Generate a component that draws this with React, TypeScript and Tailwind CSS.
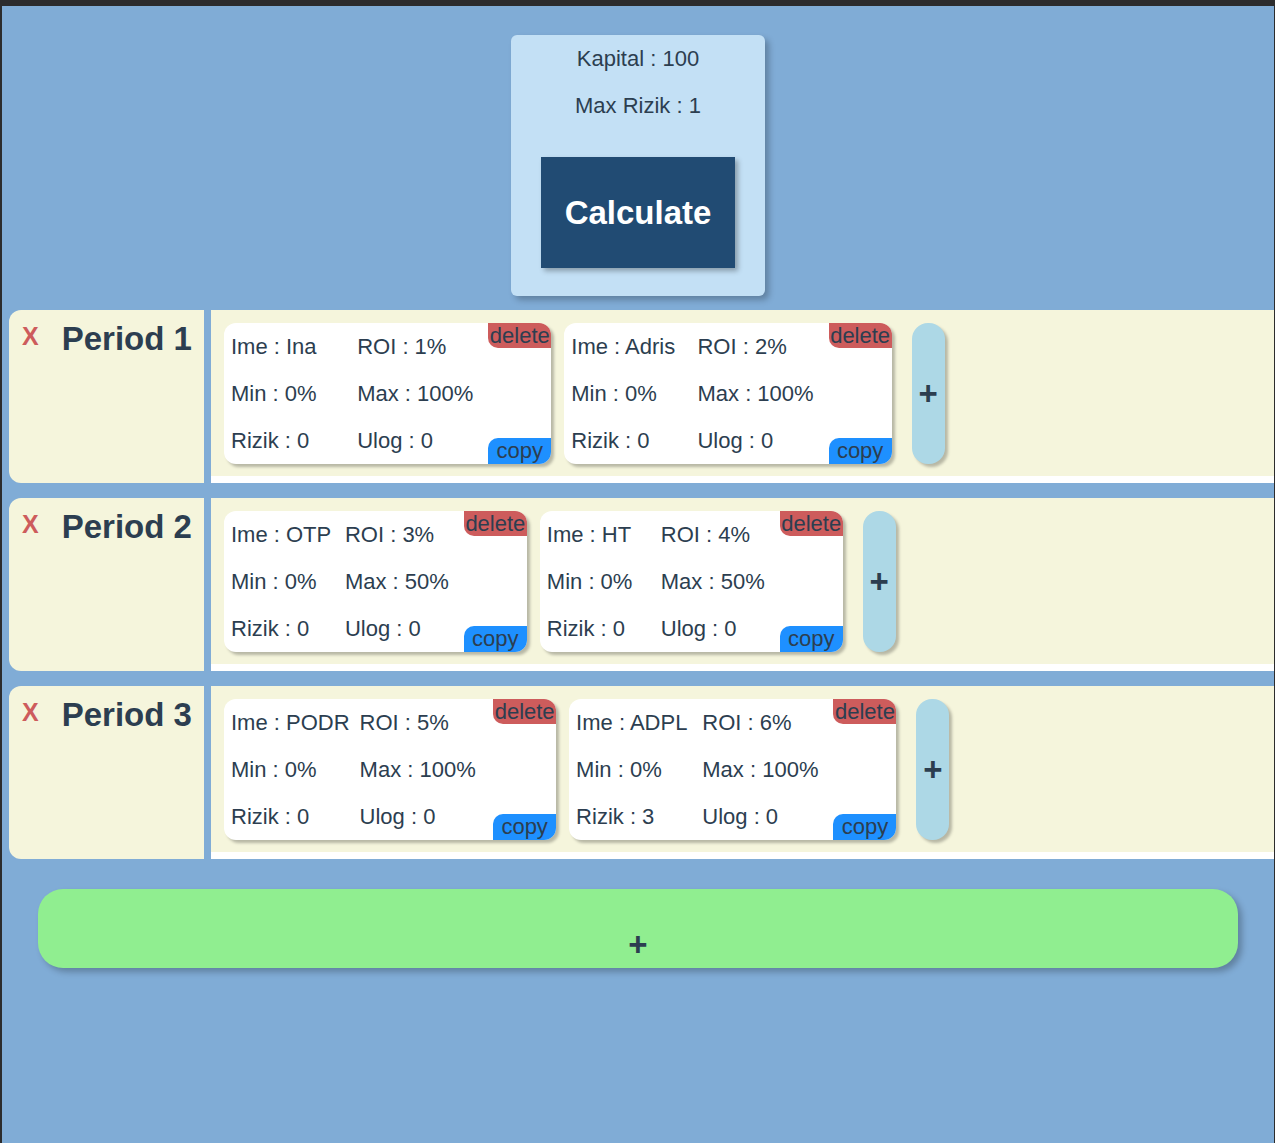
import { useState } from 'react';

type Item = { ime: string; roi: number; min: number; max: number; rizik: number; ulog: number };
type Period = { name: string; items: Item[] };

const initialPeriods: Period[] = [
  {
    name: 'Period 1',
    items: [
      { ime: 'Ina', roi: 1, min: 0, max: 100, rizik: 0, ulog: 0 },
      { ime: 'Adris', roi: 2, min: 0, max: 100, rizik: 0, ulog: 0 },
    ],
  },
  {
    name: 'Period 2',
    items: [
      { ime: 'OTP', roi: 3, min: 0, max: 50, rizik: 0, ulog: 0 },
      { ime: 'HT', roi: 4, min: 0, max: 50, rizik: 0, ulog: 0 },
    ],
  },
  {
    name: 'Period 3',
    items: [
      { ime: 'PODR', roi: 5, min: 0, max: 100, rizik: 0, ulog: 0 },
      { ime: 'ADPL', roi: 6, min: 0, max: 100, rizik: 3, ulog: 0 },
    ],
  },
];

function ItemCard({ item, onDelete, onCopy }: { item: Item; onDelete: () => void; onCopy: () => void }) {
  const cells = [
    `Ime : ${item.ime}`,
    `ROI : ${item.roi}%`,
    `Min : ${item.min}%`,
    `Max : ${item.max}%`,
    `Rizik : ${item.rizik}`,
    `Ulog : ${item.ulog}`,
  ];
  return (
    <div className="flex overflow-hidden rounded-[12px] bg-white pl-[7px] shadow-[3px_3px_3px_rgba(0,0,0,0.25)]">
      <div className="grid grid-cols-[1fr_1fr]">
        {cells.map((c) => (
          <div key={c} className="flex h-[47px] items-center whitespace-nowrap pr-[10px]">
            {c}
          </div>
        ))}
      </div>
      <div className="ml-[5px] flex flex-col justify-between">
        <button
          onClick={onDelete}
          className="rounded-bl-[10px] bg-[#cd5c5c] px-[1.5px] leading-[25px] text-[#2c3e50]"
        >
          delete
        </button>
        <button
          onClick={onCopy}
          className="rounded-tl-[10px] bg-[#1e90ff] px-[1.5px] leading-[26px] text-[#2c3e50]"
        >
          copy
        </button>
      </div>
    </div>
  );
}

export default function App() {
  const [periods, setPeriods] = useState<Period[]>(initialPeriods);
  const kapital = 100;
  const maxRizik = 1;

  function removePeriod(pi: number) {
    setPeriods(periods.filter((_, i) => i !== pi));
  }

  function updateItems(pi: number, fn: (items: Item[]) => Item[]) {
    setPeriods(periods.map((p, i) => (i === pi ? { ...p, items: fn(p.items) } : p)));
  }

  function addPeriod() {
    setPeriods([...periods, { name: `Period ${periods.length + 1}`, items: [] }]);
  }

  return (
    <div className="min-h-screen border-l-2 border-r border-t-[6px] border-[#2c2c2d] bg-[#80acd6] font-['Liberation_Sans',Arial,sans-serif] text-[22px] text-[#2c3e50]">
      {/* Settings card */}
      <div className="flex justify-center pt-[29px]">
        <div className="flex w-[254px] flex-col items-center rounded-md bg-[#c3e0f5] pb-[28px] pt-[11px] shadow-[4px_4px_6px_rgba(0,0,0,0.25)]">
          <p className="leading-[25px]">Kapital : {kapital}</p>
          <p className="mt-[22px] leading-[25px]">Max Rizik : {maxRizik}</p>
          <button className="mt-[39px] h-[111px] w-[194px] bg-[#214b73] text-[33px] font-bold text-white shadow-[3px_3px_5px_rgba(0,0,0,0.3)]">
            Calculate
          </button>
        </div>
      </div>

      {/* Periods */}
      <div className="mt-[14px] flex flex-col gap-[15px] pl-[7px]">
        {periods.map((period, pi) => (
          <div key={period.name} className="flex gap-[7px]">
            <div className="flex w-[195px] shrink-0 items-start gap-[23px] rounded-l-[12px] bg-[#f5f5dc] pl-[13px] pt-[4px]">
              <button
                onClick={() => removePeriod(pi)}
                className="mt-[4px] text-[25px] font-bold text-[#cd5c5c]"
              >
                X
              </button>
              <h2 className="text-[33px] font-bold">{period.name}</h2>
            </div>
            <div className="flex flex-1 flex-col bg-[#f5f5dc]">
              <div className="flex items-stretch gap-[13px] pb-[12px] pl-[13px] pt-[13px]">
                {period.items.map((item, ii) => (
                  <ItemCard
                    key={ii}
                    item={item}
                    onDelete={() => updateItems(pi, (items) => items.filter((_, j) => j !== ii))}
                    onCopy={() => updateItems(pi, (items) => [...items, { ...item }])}
                  />
                ))}
                <button
                  onClick={() =>
                    updateItems(pi, (items) => [
                      ...items,
                      { ime: '', roi: 0, min: 0, max: 100, rizik: 0, ulog: 0 },
                    ])
                  }
                  className="ml-[7px] flex h-[141px] w-[33px] items-center justify-center rounded-[16px] bg-[#add8e6] text-[33px] font-bold shadow-[3px_3px_3px_rgba(0,0,0,0.25)]"
                >
                  +
                </button>
              </div>
              <div className="h-[7px] bg-white" />
            </div>
          </div>
        ))}
      </div>

      {/* Add period */}
      <div className="mx-[36px] mt-[30px]">
        <button
          onClick={addPeriod}
          className="flex h-[79px] w-full justify-center rounded-[25px] bg-[#90ee90] pt-[37px] text-[33px] font-bold leading-[38px] shadow-[4px_4px_6px_rgba(0,0,0,0.25)]"
        >
          +
        </button>
      </div>
    </div>
  );
}
